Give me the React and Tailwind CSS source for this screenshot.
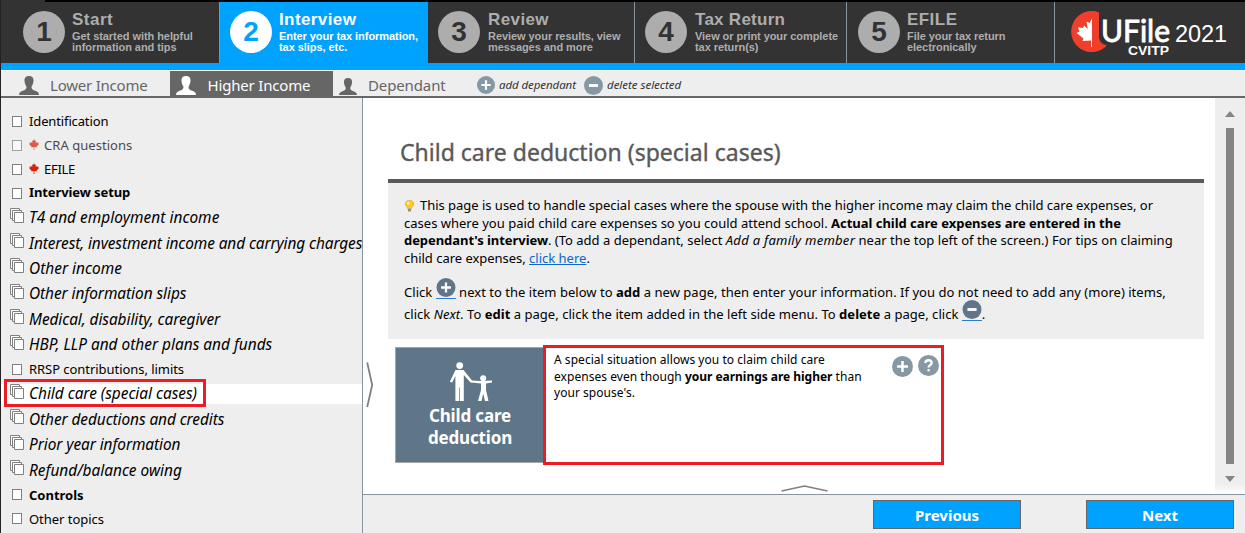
import React from "react";

const LEAF =
  "M12 0 L9.8 4.6 L7.2 3.2 L8.2 9.4 L5 6.6 L4.3 8.4 L0.8 7.8 L2 11.2 L0.2 12.2 L6 16.6 L5.3 18.4 L11.2 17.6 L11 24 L13 24 L12.8 17.6 L18.7 18.4 L18 16.6 L23.8 12.2 L22 11.2 L23.2 7.8 L19.7 8.4 L19 6.6 L15.8 9.4 L16.8 3.2 L14.2 4.6 Z";

const steps = [
  { n: "1", title: "Start", a: "Get started with helpful", b: "information and tips", box: "w-[219px] pl-[23px]", gap: "ml-[7px]", ls: "tracking-[0.5px]" },
  { n: "2", title: "Interview", a: "Enter your tax information,", b: "tax slips, etc.", box: "w-[209px] border-l border-[#8a949c] pl-[10px]", gap: "ml-[7px]", ls: "tracking-[0.4px]", on: true },
  { n: "3", title: "Review", a: "Review your results, view", b: "messages and more", box: "w-[206px] pl-[10px]", gap: "ml-[8px]", ls: "tracking-[0.4px]" },
  { n: "4", title: "Tax Return", a: "View or print your complete", b: "tax return(s)", box: "w-[212px] border-l border-[#8a949c] pl-[10px]", gap: "ml-[8px]", ls: "tracking-[0.27px]" },
  { n: "5", title: "EFILE", a: "File your tax return", b: "electronically", box: "w-[208px] border-l border-[#8a949c] pl-[11px]", gap: "ml-[7px]", ls: "tracking-[0.45px]" },
];

function Step({ s }) {
  return (
    <div className={`flex shrink-0 pt-[9px] ${s.box} ${s.on ? "bg-[#00a2ff] text-white" : "text-[#adadad]"}`}>
      <div
        className={`flex size-[42px] shrink-0 items-center justify-center rounded-full text-[28px] leading-none font-bold ${
          s.on ? "bg-white text-[#00a2ff]" : "bg-[#adadad] text-[#333333]"
        }`}
      >
        {s.n}
      </div>
      <div className={`whitespace-nowrap font-bold ${s.gap}`}>
        <div className={`h-[20px] text-[17px] leading-[17px] ${s.ls}`}>{s.title}</div>
        <div className="text-[11px] leading-[11px] tracking-[-0.06px]">
          {s.a}
          <br />
          {s.b}
        </div>
      </div>
    </div>
  );
}

function Logo() {
  return (
    <svg className="h-[61px] w-[190px]" viewBox="1055 2 190 61">
      <path d="M1099 12.4 A20.5 20.5 0 1 0 1107 45.2 C1101.5 44.5 1099 41 1099 36 Z" fill="#f03e2d" />
      <path
        d="M1092 18.5 L1089.5 23 L1086.5 21.5 L1087.8 29 L1084 25.5 L1083 28 L1078 27.2 L1079.5 31.5 L1076.5 33 L1083.5 38.5 L1082.5 41 L1091.2 40.5 V47 H1092 Z"
        fill="#fff"
      />
      <text x="1101" y="41.7" fill="#fff" stroke="#fff" strokeWidth="0.9" className="font-['Lato'] text-[31px]" textLength="69" lengthAdjust="spacingAndGlyphs">UFile</text>
      <text x="1128" y="54.6" fill="#fff" className="font-['Liberation_Sans'] text-[12.5px] font-bold" textLength="41" lengthAdjust="spacingAndGlyphs">CVITP</text>
      <text x="1175" y="42" fill="#fff" className="font-['Liberation_Sans'] text-[23.5px]" textLength="52">2021</text>
    </svg>
  );
}

function Person({ className }) {
  return (
    <svg className={className} viewBox="0 0 20 19" fill="currentColor">
      <path d="M10 0 C6.6 0 5.2 2.2 5.5 5 C5.7 7.6 6.6 9.4 7.4 10.6 C7.6 12.4 7.1 13.3 5.8 14 L2 15.6 Q0 16.6 0 19 H20 Q20 16.6 18 15.6 L14.2 14 C12.9 13.3 12.4 12.4 12.6 10.6 C13.4 9.4 14.3 7.6 14.5 5 C14.8 2.2 13.4 0 10 0 Z" />
    </svg>
  );
}

function Round({ kind, className }) {
  return (
    <svg className={className} viewBox="0 0 20 20">
      <circle cx="10" cy="10" r="10" fill="currentColor" />
      {kind === "q" ? (
        <g fill="none" stroke="#fff" strokeWidth="2.2">
          <path d="M7 7.6 Q7.2 5 10 5 Q13 5 13 7.4 Q13 8.8 11.4 9.8 Q10.1 10.6 10.1 12" />
          <path d="M10.1 13.4 V15.6" />
        </g>
      ) : (
        <path d={kind === "plus" ? "M4.8 10 H15.2 M10 4.8 V15.2" : "M5.2 10 H14.8"} stroke="#fff" strokeWidth={kind === "plus" ? 2.4 : 3} />
      )}
    </svg>
  );
}

const menu = [
  { t: "Identification", ls: "mt-[2px] tracking-[-0.13px]" },
  { t: "CRA questions", ls: "mt-[2px] tracking-[0.05px]", leaf: true, dim: true },
  { t: "EFILE", ls: "mt-[2px] tracking-[-0.3px]", leaf: true },
  { t: "Interview setup", ls: "tracking-[-0.1px]", bold: true },
  { t: "T4 and employment income", ls: "tracking-[0.05px]", multi: true },
  { t: "Interest, investment income and carrying charges", ls: "tracking-[-0.09px]", multi: true },
  { t: "Other income", ls: "tracking-[0.03px]", multi: true },
  { t: "Other information slips", ls: "tracking-[-0.05px]", multi: true },
  { t: "Medical, disability, caregiver", ls: "tracking-[-0.06px]", multi: true },
  { t: "HBP, LLP and other plans and funds", ls: "tracking-[0.01px]", multi: true },
  { t: "RRSP contributions, limits", ls: "tracking-[-0.05px]" },
  { t: "Child care (special cases)", ls: "tracking-[-0.02px]", multi: true, on: true },
  { t: "Other deductions and credits", ls: "tracking-[-0.07px]", multi: true },
  { t: "Prior year information", ls: "tracking-[-0.06px]", multi: true },
  { t: "Refund/balance owing", ls: "tracking-[0px]", multi: true },
  { t: "Controls", ls: "mt-[2px] tracking-[0px]", bold: true },
  { t: "Other topics", ls: "mt-[2px] tracking-[-0.03px]" },
];

function MenuRow({ m }) {
  return (
    <div className={`relative flex shrink-0 items-center ${m.multi ? "h-[25.4px]" : "h-[24px]"}`}>
      <div className={`flex h-[20px] w-full items-center whitespace-nowrap pl-[9px] ${m.on ? "bg-white" : ""} ${m.dim ? "opacity-70" : ""}`}>
        {m.multi ? (
          <svg className="mr-[5px] -mt-[5px] h-[15px] w-[14px] shrink-0" viewBox="0 0 14 15" fill="#fff" stroke="#808080">
            <path d="M0.5 0.5 H9.5 V10.5 H0.5 Z" />
            <path d="M2.5 2.5 H11.5 V12.5 H2.5 Z" />
            <path d="M4.5 4.5 H13.5 V14.5 H4.5 Z" />
          </svg>
        ) : (
          <span className="mr-[7px] ml-[2px] h-[11px] w-[10px] shrink-0 border border-[#808080] bg-white" />
        )}
        {m.leaf && (
          <svg className="mr-[5px] -mt-px h-[11px] w-[10px] shrink-0" viewBox="0 0 24 24" preserveAspectRatio="none" fill="#d81e05">
            <path d={LEAF} />
          </svg>
        )}
        <span className={`${m.multi ? "text-[15.4px] italic" : "text-[13px]"} ${m.bold ? "font-bold" : ""} ${m.ls}`}>{m.t}</span>
      </div>
      {m.on && <div className="absolute -top-[2px] left-[3px] h-[28px] w-[202px] border-[3px] border-[#ed1c24]" />}
    </div>
  );
}

function InlineRound({ kind }) {
  return (
    <span className="inline-block h-[21px] w-[20px] border-b border-[#2a7fd4] align-[-2px]">
      <Round kind={kind} className="block h-[19px] w-[20px] text-[#5f7588]" />
    </span>
  );
}

export default function App() {
  return (
    <div className="flex h-[533px] w-[1245px] flex-col overflow-hidden border-l border-[#222] bg-white font-['Noto_Sans','Open_Sans',sans-serif] text-black">
      <div className="flex h-[2px] shrink-0 bg-black">
        <div className="w-[44px] bg-[#333333]" />
      </div>
      <header className="-ml-px flex h-[61px] shrink-0 bg-[#333333] font-['Liberation_Sans',Arial,sans-serif]">
        {steps.map((s) => (
          <Step key={s.n} s={s} />
        ))}
        <div className="flex-1 border-l border-[#8a949c]">
          <Logo />
        </div>
      </header>
      <div className="h-[7px] shrink-0 bg-[#00a2ff]" />

      <nav className="mt-px flex h-[27px] shrink-0 whitespace-nowrap border-b-2 border-[#666666] bg-[#eeeeee] text-[15px] text-[#666666]">
        <div className="flex w-[169px] items-center pl-[18px]">
          <Person className="mt-[4px] h-[19px] w-[20px] shrink-0" />
          <span className="mt-[4px] ml-[11px] tracking-[-0.22px]">Lower Income</span>
        </div>
        <div className="flex w-[163px] items-center bg-[#666666] pl-[6px] text-white">
          <Person className="mt-[4px] h-[19px] w-[20px] shrink-0" />
          <span className="mt-[4px] ml-[11.5px] tracking-[-0.18px]">Higher Income</span>
        </div>
        <div className="flex w-[144px] items-center pl-[6px]">
          <Person className="mt-[5px] h-[17px] w-[18px] shrink-0" />
          <span className="mt-[4px] ml-[11px] tracking-[-0.12px]">Dependant</span>
        </div>
        <div className="flex items-center pt-[3px] text-[11.5px] text-[#333] italic">
          <Round kind="plus" className="h-[18px] w-[18px] text-[#8798a5]" />
          <span className="ml-[4px] w-[85px] tracking-[-0.08px]">add dependant</span>
          <Round kind="minus" className="h-[19px] w-[19px] text-[#8798a5]" />
          <span className="ml-[4px] tracking-[-0.02px]">delete selected</span>
        </div>
      </nav>

      <div className="flex min-h-0 flex-1">
        <aside className="flex w-[362px] shrink-0 flex-col overflow-hidden border-r border-[#8895a0] bg-[#eeeeee] pt-[11px]">
          {menu.map((m) => (
            <MenuRow key={m.t} m={m} />
          ))}
        </aside>

        <div className="flex min-w-0 flex-1 flex-col">
          <div className="relative flex h-[396px] shrink-0">
            <main className="flex-1 pr-[11px] pl-[25px]">
              <h1 className="h-[81px] pt-[39px] pl-[12px] text-[23px] leading-[31px] tracking-[0.01px] whitespace-nowrap text-[#595959] [-webkit-text-stroke:0.35px_#595959]">
                Child care deduction (special cases)
              </h1>
              <section className="h-[160px] border-t-[4px] border-[#595959] bg-[#eeeeee] pt-[14px] pl-[16px] text-[13px] leading-[17.6px] whitespace-nowrap">
                <p>
                  <svg className="mr-[5px] inline-block h-[12px] w-[11px] align-[-2px]" viewBox="0 0 11 12">
                    <path d="M5.5 0.3 C2.6 0.3 1.3 2.2 1.3 4 C1.3 6 3.3 6.8 3.6 8.6 H7.4 C7.7 6.8 9.7 6 9.7 4 C9.7 2.2 8.4 0.3 5.5 0.3 Z" fill="#fdc91c" stroke="#d9a63a" strokeWidth="0.6" />
                    <ellipse cx="4.3" cy="3.2" rx="1.4" ry="1.7" fill="#fff3a8" />
                    <path d="M3.7 8.8 H7.3 L6.8 11.4 H4.2 Z" fill="#8b8f94" />
                  </svg>
                  <span className="tracking-[-0.024px]">
                    This page is used to handle special cases where the spouse with the higher income may claim the child care expenses, or
                  </span>
                  <br />
                  <span className="tracking-[0.01px]">cases where you paid child care expenses so you could attend school. </span>
                  <b className="tracking-[-0.02px]">Actual child care expenses are entered in the</b>
                  <br />
                  <b className="tracking-[-0.06px]">dependant's interview</b>. (To add a dependant, select{" "}
                  <i className="tracking-[0.28px]">Add a family member</i>
                  <span className="tracking-[0.035px]"> near the top left of the screen.) For tips on claiming</span>
                  <br />
                  <span className="tracking-[-0.03px]">child care expenses, </span>
                  <a className="text-[#0b67c9] underline">click here</a>.
                </p>
                <p className="mt-[10.6px] leading-[16px] tracking-[0.03px]">
                  Click <InlineRound kind="plus" /> next to the item below to <b>add</b> a new page, then enter your information. If you do not need to add any (more) items,
                  <br />
                  click <i>Next</i>. To <b>edit</b> a page, click the item added in the left side menu. To <b>delete</b> a page, click <InlineRound kind="minus" />.
                </p>
              </section>
              <section className="mt-[6px] ml-[7px] flex h-[120px] items-center">
                <div className="flex h-[116px] w-[149px] shrink-0 flex-col items-center border border-r-0 border-[#a6a6a6] bg-[#5f7588] pt-[14px] text-white">
                  <svg className="ml-px h-[40px] w-[44px]" viewBox="0 0 44 40" fill="#fff">
                    <circle cx="10.7" cy="3.6" r="3.4" />
                    <path d="M6.5 8 H14.5 L23 18.6 L31 19 L43 18.4 V20.4 L37 21.4 V28 L39.5 39 H36 L34.2 31.5 L32.5 39 H29 L32 28 V21.6 L21.5 20.6 L14.8 13 V39 H11 V25.5 H10.3 V39 H6.4 V14 L3.2 20.5 L0.8 19.8 Z" />
                    <circle cx="34.2" cy="16.3" r="3" />
                  </svg>
                  <div className="mt-[3px] text-center text-[17px] leading-[22px] font-bold tracking-[-0.15px]">
                    Child care
                    <br />
                    deduction
                  </div>
                </div>
                <div className="-ml-px flex h-[120px] w-[401px] items-start border-[3px] border-[#ed1c24] bg-white pt-[4px] pl-[8px]">
                  <p className="w-[338px] shrink-0 text-[12px] leading-[16.5px] tracking-[0.04px] whitespace-nowrap">
                    A special situation allows you to claim child care
                    <br />
                    expenses even though <b className="tracking-[-0.03px]">your earnings are higher</b> than
                    <br />
                    your spouse's.
                  </p>
                  <Round kind="plus" className="mt-[4px] h-[21px] w-[21px] shrink-0 text-[#8798a5]" />
                  <Round kind="q" className="mt-[3px] ml-[5px] h-[21px] w-[21px] shrink-0 text-[#8798a5]" />
                </div>
              </section>
            </main>
            <div className="flex w-[30px] flex-col items-center bg-[#eeeeee] pt-[13px]">
              <svg className="h-[6px] w-[10px]" viewBox="0 0 10 6"><path d="M0 6 L5 0 L10 6 Z" fill="#858585" /></svg>
              <div className="mt-[11px] h-[336px] w-[8px] bg-[#858585]" />
              <svg className="mt-[12px] h-[6px] w-[10px]" viewBox="0 0 10 6"><path d="M0 0 L5 6 L10 0 Z" fill="#858585" /></svg>
              <div className="mt-[2px] w-full flex-1 bg-linear-to-b from-[#eeeeee] to-white" />
            </div>
            <svg className="absolute top-[264px] left-[3px] h-[46px] w-[8px]" viewBox="0 0 8 46">
              <path d="M1.2 0.5 L6.2 23 L1.2 45" fill="none" stroke="#808080" strokeWidth="1.8" />
            </svg>
            <svg className="absolute top-[387px] left-[418px] h-[7px] w-[47px]" viewBox="0 0 47 7">
              <path d="M0.5 6 L23.5 1 L46.5 6" fill="none" stroke="#808080" strokeWidth="1.7" />
            </svg>
          </div>
          <footer className="flex flex-1 justify-end gap-[65px] border-t border-[#8895a0] bg-[#eeeeee] pt-[5px] pr-[11px] text-[15px] font-bold text-white">
            <button className="flex h-[29px] w-[148px] items-center justify-center border border-[#666] bg-[#00a2ff] pt-[2px]">Previous</button>
            <button className="flex h-[29px] w-[148px] items-center justify-center border border-[#666] bg-[#00a2ff] pt-[2px]">Next</button>
          </footer>
        </div>
      </div>
    </div>
  );
}
